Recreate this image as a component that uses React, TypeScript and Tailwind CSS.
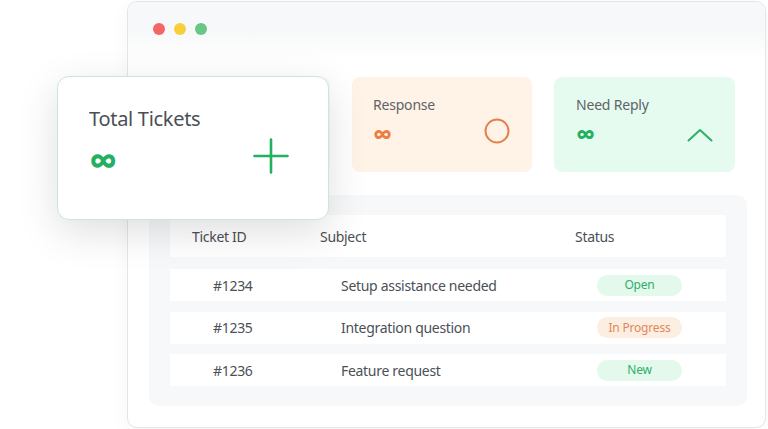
interface Ticket {
  id: string;
  subject: string;
  status: 'Open' | 'In Progress' | 'New';
}

const tickets: Ticket[] = [
  { id: '#1234', subject: 'Setup assistance needed', status: 'Open' },
  { id: '#1235', subject: 'Integration question', status: 'In Progress' },
  { id: '#1236', subject: 'Feature request', status: 'New' },
];

const pillStyles: Record<Ticket['status'], string> = {
  Open: 'bg-[#e3f9ec] text-[#2fae6a]',
  'In Progress': 'bg-[#fdeee2] text-[#e3875a]',
  New: 'bg-[#e3f9ec] text-[#2fae6a]',
};

export default function App() {
  return (
    <div
      className="relative w-[768px] h-[429px] bg-white overflow-hidden"
      style={{ fontFamily: '"Noto Sans", "Open Sans", sans-serif' }}
    >
      {/* browser window */}
      <div className="ml-[127px] mt-[1px] w-[639px] h-[427px] rounded-[10px] border border-[#e3e5e8] bg-white overflow-hidden shadow-[0_4px_20px_rgba(0,0,0,0.04)]">
        <div className="h-[58px] bg-gradient-to-b from-[#f7f8f9] via-[#f7f8f9] to-white flex items-start pt-[21px] pl-[25px] gap-[9px]">
          <span className="w-[12px] h-[12px] rounded-full bg-[#f56565]" />
          <span className="w-[12px] h-[12px] rounded-full bg-[#f6cf3a]" />
          <span className="w-[12px] h-[12px] rounded-full bg-[#68c785]" />
        </div>

        <div className="pl-[21px] pr-[19px] pt-[17px]">
          <div className="grid grid-cols-[181px_180px_181px] gap-[22px]">
            <div className="h-[95px] rounded-lg bg-[#f5f7f8]" />

            <div className="h-[95px] rounded-lg bg-[#fff2e7] pl-[21px] pr-[23px] pt-[18px]">
              <p className="text-[14px] leading-[20px] tracking-[-0.2px] text-[#5f6368]">Response</p>
              <div className="flex items-center justify-between mt-[2px]">
                <span className="text-[27px] font-bold text-[#ee7d43] leading-[34px]">∞</span>
                <svg width="26" height="26" viewBox="0 0 26 26" className="-mt-[7px] -mr-[1px]">
                  <circle cx="13" cy="13" r="11.5" fill="none" stroke="#e5804c" strokeWidth="2" />
                </svg>
              </div>
            </div>

            <div className="h-[95px] rounded-lg bg-[#e5fbef] pl-[22px] pr-[22px] pt-[18px]">
              <p className="text-[14px] leading-[20px] tracking-[-0.2px] text-[#5f6368]">Need Reply</p>
              <div className="flex items-center justify-between mt-[2px]">
                <span className="text-[27px] font-bold text-[#22b061] leading-[34px]">∞</span>
                <svg width="26" height="14" viewBox="0 0 26 14" className="mt-[1px]">
                  <polyline
                    points="1.5,12.5 13,2 24.5,12.5"
                    fill="none"
                    stroke="#2fae6a"
                    strokeWidth="2"
                    strokeLinecap="round"
                    strokeLinejoin="round"
                  />
                </svg>
              </div>
            </div>
          </div>

          <div className="mt-[23px] w-[598px] h-[211px] rounded-[10px] bg-[#f6f8f9] px-[21px] pt-[20px]">
            <div className="h-[42px] bg-white grid grid-cols-[128px_255px_1fr] items-center pl-[22px] text-[14px] tracking-[-0.3px] text-[#4b5056]">
              <span>Ticket ID</span>
              <span>Subject</span>
              <span>Status</span>
            </div>

            <div className="mt-[12px] flex flex-col gap-[10.5px]">
              {tickets.map((t) => (
                <div
                  key={t.id}
                  className="h-[32px] bg-white grid grid-cols-[128px_256px_1fr] items-center pl-[43px] text-[14px] tracking-[-0.3px] text-[#4b5056]"
                >
                  <span>{t.id}</span>
                  <span>{t.subject}</span>
                  <span
                    className={`w-[85px] h-[21px] rounded-full flex items-center justify-center text-[12px] tracking-[-0.2px] ${pillStyles[t.status]}`}
                  >
                    {t.status}
                  </span>
                </div>
              ))}
            </div>
          </div>
        </div>
      </div>

      {/* floating summary card */}
      <div className="absolute left-[57px] top-[76px] w-[272px] h-[144px] rounded-xl bg-white border border-[#c9e9d2] shadow-[0_12px_40px_rgba(0,0,0,0.13)] pl-[31px] pr-[39px] pt-[28px]">
        <p className="text-[20px] leading-[28px] tracking-[-0.3px] text-[#4a4f55]">Total Tickets</p>
        <div className="flex items-center justify-between mt-[5px]">
          <span className="text-[40px] font-bold text-[#22b061] leading-[44px]">∞</span>
          <svg width="36" height="36" viewBox="0 0 36 36" className="-mt-[8px]">
            <path d="M18 1.5v33M1.5 18h33" fill="none" stroke="#22b061" strokeWidth="2.6" strokeLinecap="round" />
          </svg>
        </div>
      </div>
    </div>
  );
}
